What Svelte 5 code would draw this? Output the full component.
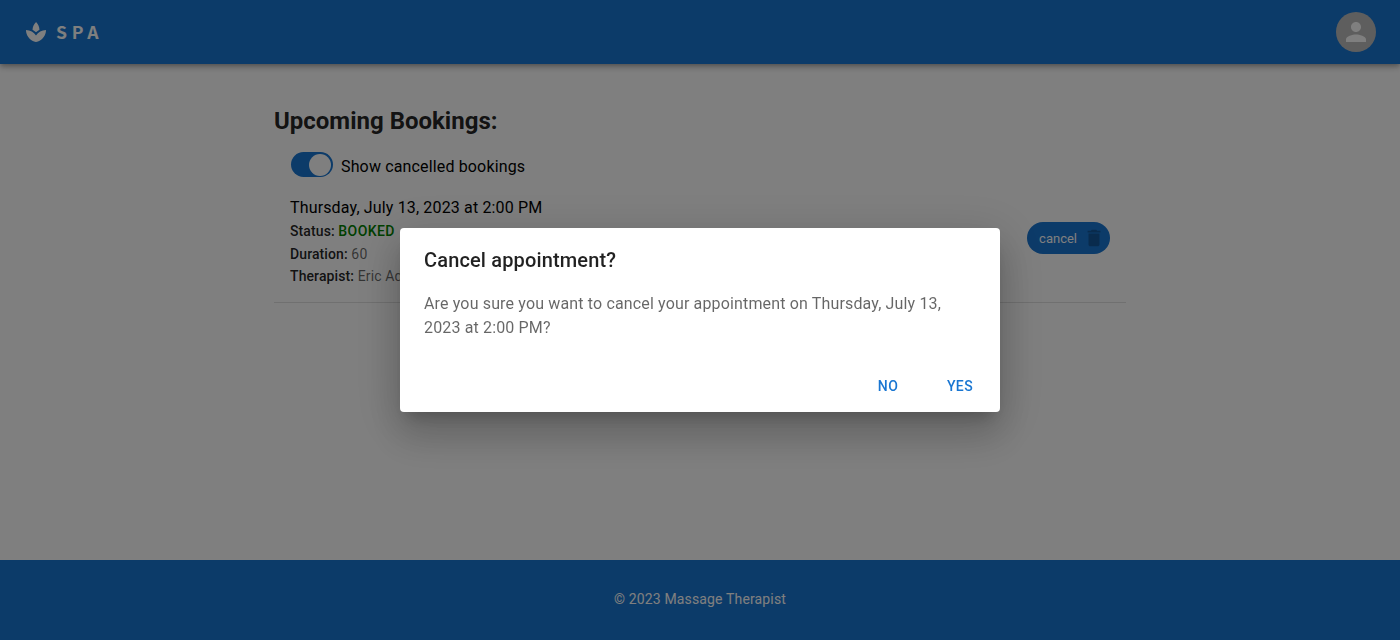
<script>
  const when = 'Thursday, July 13, 2023 at 2:00 PM';
  let showCancelled = $state(true);
</script>

<div class="page">
  <header>
    <svg class="spa" viewBox="0 0 24 24"><path d="M15.49 9.63c-.18-2.79-1.31-5.51-3.43-7.63-2.14 2.14-3.32 4.86-3.55 7.63 1.28.68 2.46 1.56 3.49 2.63 1.03-1.06 2.21-1.94 3.49-2.63zM12 15.45C9.85 12.17 6.18 10 2 10c0 5.32 3.36 9.82 8.03 11.49.63.23 1.29.4 1.97.51.68-.12 1.33-.29 1.97-.51C18.64 19.82 22 15.32 22 10c-4.18 0-7.85 2.17-10 5.45z" /></svg>
    <span class="brand">SPA</span>
    <div class="avatar">
      <svg viewBox="0 0 24 24"><path d="M12 12c2.21 0 4-1.79 4-4s-1.79-4-4-4-4 1.79-4 4 1.79 4 4 4zm0 2c-2.67 0-8 1.34-8 4v2h16v-2c0-2.66-5.33-4-8-4z" /></svg>
    </div>
  </header>

  <main>
    <h1>Upcoming Bookings:</h1>
    <label class="toggle">
      <input type="checkbox" bind:checked={showCancelled} />
      <span class="track"><span class="thumb"></span></span>
      <span>Show cancelled bookings</span>
    </label>
    <div class="booking">
      <div class="details">
        <div class="when">{when}</div>
        <div class="line"><b>Status:</b> <b class="booked">BOOKED</b></div>
        <div class="line"><b>Duration:</b> 60</div>
        <div class="line last"><b>Therapist:</b> Eric Adams</div>
      </div>
      <button class="chip">
        <span>cancel</span>
        <svg viewBox="0 0 24 24"><path d="M6 19c0 1.1.9 2 2 2h8c1.1 0 2-.9 2-2V7H6v12zM19 4h-3.5l-1-1h-5l-1 1H5v2h14V4z" /></svg>
      </button>
    </div>
  </main>

  <footer>© 2023 Massage Therapist</footer>
</div>

<div class="backdrop">
  <div class="dialog" role="dialog" aria-modal="true" aria-labelledby="title">
    <h2 id="title">Cancel appointment?</h2>
    <p>Are you sure you want to cancel your appointment on {when}?</p>
    <div class="actions">
      <button>NO</button>
      <button>YES</button>
    </div>
  </div>
</div>

<style>
  :global(body) {
    margin: 0;
    overflow: hidden;
  }
  .page,
  .backdrop {
    font-family: Roboto, 'Liberation Sans', sans-serif;
    box-sizing: border-box;
  }
  button {
    font-family: inherit;
    border: 0;
    cursor: pointer;
  }
  .page {
    height: 640px;
    display: flex;
    flex-direction: column;
    background: #fff;
    color: #000;
  }
  header {
    height: 64px;
    flex: none;
    box-sizing: border-box;
    padding: 0 24px;
    display: flex;
    align-items: center;
    background: #1976d2;
    color: #fff;
    box-shadow:
      0 2px 4px -1px rgba(0, 0, 0, 0.2),
      0 4px 5px 0 rgba(0, 0, 0, 0.14),
      0 1px 10px 0 rgba(0, 0, 0, 0.12);
  }
  svg {
    fill: currentColor;
    display: block;
  }
  .spa {
    width: 24px;
    height: 24px;
    margin-right: 8px;
  }
  .brand {
    font-family: 'Noto Sans CJK SC', 'Noto Sans', sans-serif;
    font-weight: 700;
    font-size: 17.6px;
    line-height: 26px;
    letter-spacing: 4.8px;
  }
  .avatar {
    width: 40px;
    height: 40px;
    margin-left: auto;
    border-radius: 50%;
    background: #bdbdbd;
    display: grid;
    place-items: center;
  }
  .avatar svg {
    width: 30px;
    height: 30px;
  }
  main {
    width: 852px;
    flex: 1;
    margin: 0 auto;
    padding-top: 41px;
  }
  h1 {
    margin: 0;
    font-size: 24px;
    line-height: 32px;
    font-weight: 700;
    color: rgba(0, 0, 0, 0.87);
  }
  .toggle {
    display: flex;
    align-items: center;
    height: 26px;
    margin: 16px 0 0 17px;
    font-size: 16px;
    letter-spacing: 0.15px;
  }
  .toggle input {
    position: absolute;
    opacity: 0;
  }
  .track {
    width: 42px;
    height: 25px;
    box-sizing: border-box;
    margin: 0 8px 3px 0;
    padding: 2px;
    border-radius: 13px;
    background: #e9e9ea;
    display: flex;
    align-items: center;
  }
  .thumb {
    width: 22px;
    height: 22px;
    border-radius: 50%;
    background: #fff;
  }
  input:checked + .track {
    background: #1976d2;
    justify-content: flex-end;
  }
  .booking {
    display: flex;
    align-items: flex-start;
    justify-content: space-between;
    height: 124px;
    box-sizing: border-box;
    padding: 16px 16px 0;
    border-bottom: 1px solid rgba(0, 0, 0, 0.12);
  }
  .when {
    font-size: 16px;
    line-height: 25px;
    letter-spacing: 0.15px;
  }
  .line {
    font-size: 14px;
    line-height: 23px;
    letter-spacing: 0.15px;
    color: rgba(0, 0, 0, 0.6);
  }
  .last {
    line-height: 21px;
  }
  .line b {
    font-weight: 500;
    letter-spacing: 0.1px;
    color: rgba(0, 0, 0, 0.87);
  }
  .line .booked {
    color: green;
    letter-spacing: 0.4px;
  }
  .chip {
    height: 32px;
    margin-top: 27px;
    padding: 0;
    border-radius: 16px;
    display: flex;
    align-items: center;
    background: #1976d2;
    color: #fff;
    font-size: 13px;
  }
  .chip span {
    padding: 0 12px;
  }
  .chip svg {
    width: 22px;
    height: 22px;
    margin: 0 5px 0 -6px;
    color: rgba(0, 0, 0, 0.26);
  }
  footer {
    height: 80px;
    box-sizing: border-box;
    padding-bottom: 2px;
    flex: none;
    display: grid;
    place-items: center;
    background: #1976d2;
    color: #fff;
    font-size: 14px;
    letter-spacing: 0.15px;
  }
  .backdrop {
    position: fixed;
    inset: 0;
    display: grid;
    place-items: center;
    background: rgba(0, 0, 0, 0.5);
  }
  .dialog {
    width: 600px;
    background: #fff;
    border-radius: 4px;
    box-shadow:
      0 11px 15px -7px rgba(0, 0, 0, 0.2),
      0 24px 38px 3px rgba(0, 0, 0, 0.14),
      0 9px 46px 8px rgba(0, 0, 0, 0.12);
  }
  h2 {
    margin: 0;
    padding: 16px 24px;
    font-size: 20px;
    line-height: 32px;
    font-weight: 500;
    letter-spacing: 0.15px;
    color: rgba(0, 0, 0, 0.87);
  }
  p {
    margin: 0;
    padding: 0 24px 20px;
    font-size: 16px;
    line-height: 24px;
    letter-spacing: 0.15px;
    color: rgba(0, 0, 0, 0.6);
  }
  .actions {
    display: flex;
    justify-content: flex-end;
    gap: 8px;
    padding: 8px;
  }
  .actions button {
    min-width: 64px;
    height: 36px;
    padding: 0 8px;
    background: transparent;
    color: #1976d2;
    font-size: 14px;
    font-weight: 500;
    letter-spacing: 0.4px;
  }
</style>
